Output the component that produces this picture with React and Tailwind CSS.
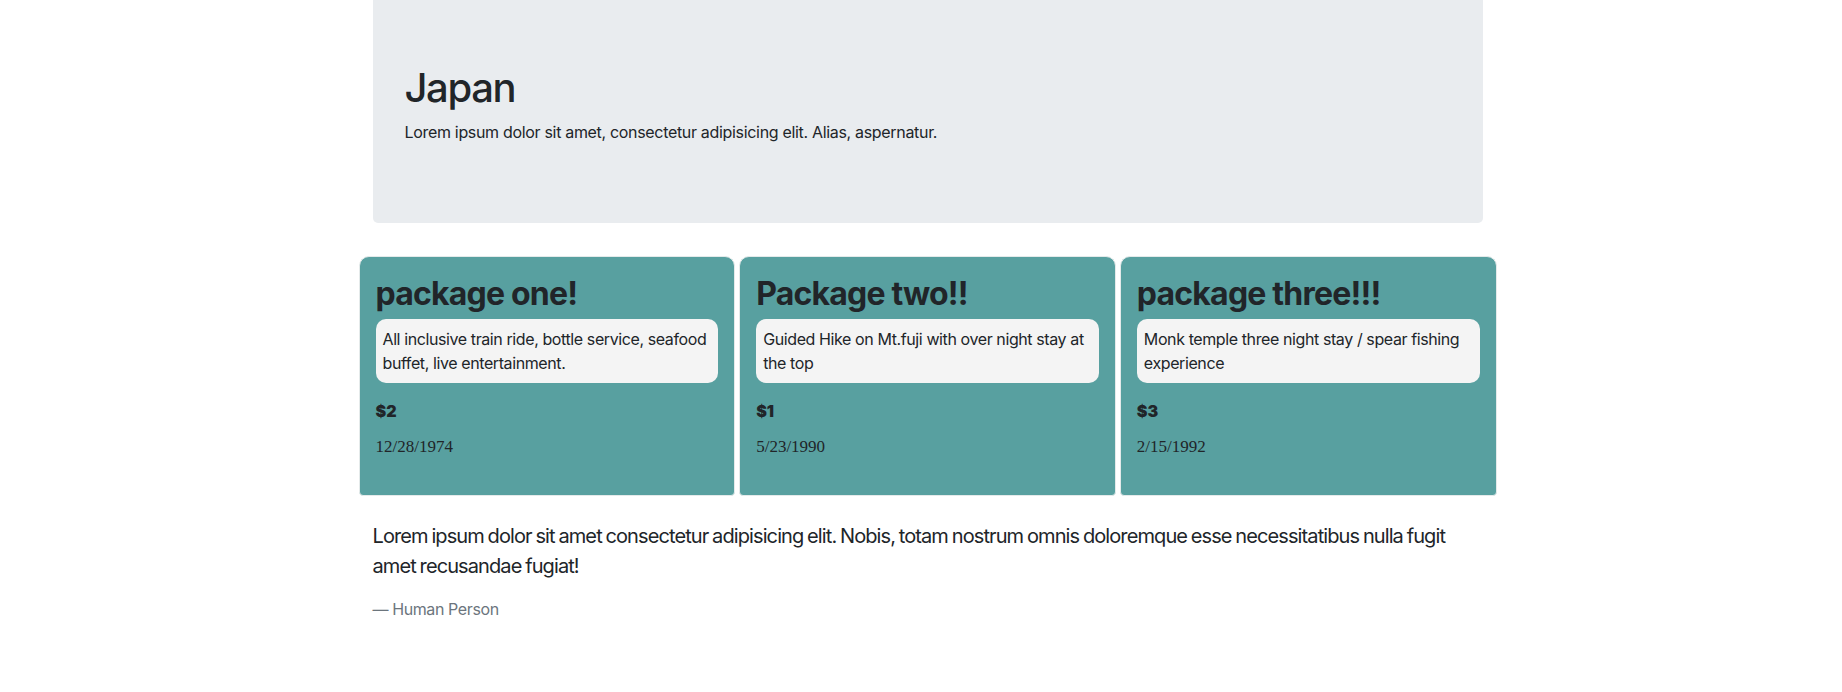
const packages = [
    {
        title: 'package one!',
        text: 'All inclusive train ride, bottle service, seafood buffet, live entertainment.',
        price: '$2',
        date: '12/28/1974',
    },
    {
        title: 'Package two!!',
        text: 'Guided Hike on Mt.fuji with over night stay at the top',
        price: '$1',
        date: '5/23/1990',
    },
    {
        title: 'package three!!!',
        text: 'Monk temple three night stay / spear fishing experience',
        price: '$3',
        date: '2/15/1992',
    },
];

function PackageCard({ pkg }) {
    return (
        <div className="flex-1 rounded-t-[10px] rounded-b-[4px] border border-[#e4eaea] bg-[#58a0a0] px-4 pt-4 pb-[20px]">
            <h2 className="mt-[2px] mb-[6px] text-[32px] font-bold leading-[1.2] tracking-[-0.025em]">{pkg.title}</h2>
            <div className="mb-4 rounded-[10px] bg-[#f4f4f4] px-[7px] py-2 text-base leading-6 tracking-[-0.025em]">
                {pkg.text}
            </div>
            <div className="mb-3 text-base font-black leading-6">{pkg.price}</div>
            <div className="mb-4 font-['Liberation_Serif',serif] text-[17px] leading-6">{pkg.date}</div>
        </div>
    );
}

function App() {
    return (
        <div className="min-h-screen bg-white font-['Inter',sans-serif] text-[#212529]">
            <div className="pl-[13px]">
                <div className="mx-auto w-[1110px]">
                    <div className="rounded-b-[5px] bg-[#e9ecef] px-8 pt-16 pb-[63px]">
                        <h1 className="mb-2 text-[40px] font-medium leading-[1.2] tracking-[-0.035em]">Japan</h1>
                        <p className="mb-4 text-base leading-6 tracking-[-0.02em]">
                            Lorem ipsum dolor sit amet, consectetur adipisicing elit. Alias, aspernatur.
                        </p>
                    </div>

                    <div className="-mx-[14px] mt-[33px] flex gap-[4px]">
                        {packages.map((pkg) => (
                            <PackageCard key={pkg.title} pkg={pkg} />
                        ))}
                    </div>

                    <blockquote className="mt-[25px]">
                        <p className="mb-4 text-[20px] leading-[1.5] tracking-[-0.045em] [word-spacing:-1px]">
                            Lorem ipsum dolor sit amet consectetur adipisicing elit. Nobis, totam nostrum omnis
                            doloremque esse necessitatibus nulla fugit amet recusandae fugiat!
                        </p>
                        <footer className="text-base leading-6 tracking-[-0.025em] text-[#6c757d]">— Human Person</footer>
                    </blockquote>
                </div>
            </div>
        </div>
    );
}

export default App;
